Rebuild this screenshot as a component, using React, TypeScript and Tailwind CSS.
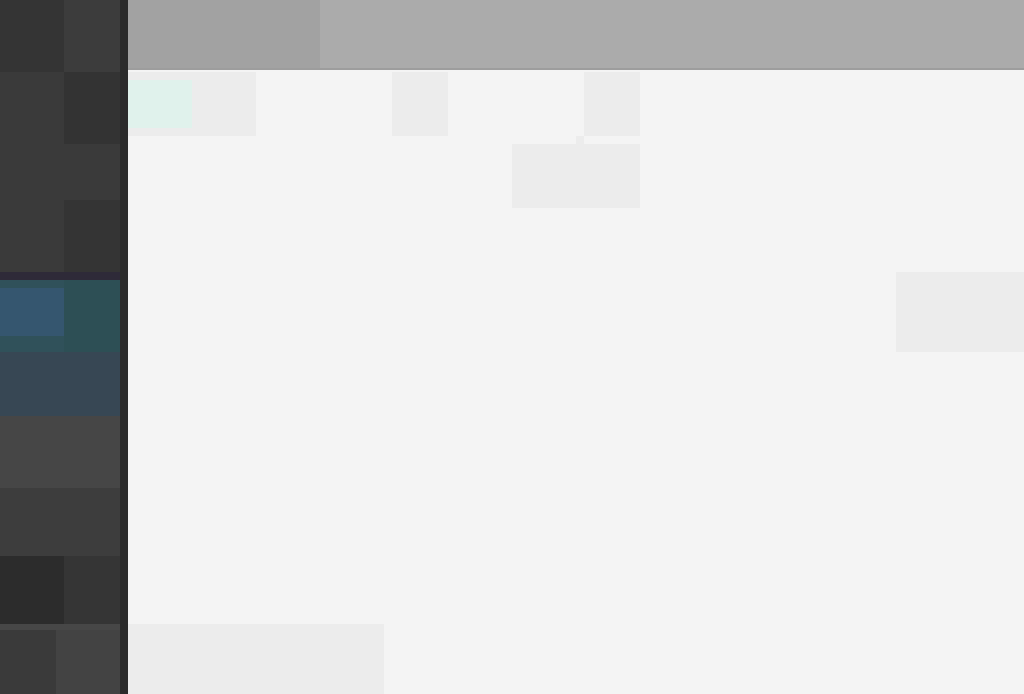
const sidebarRows: { h: string; left: string; right: string }[] = [
  { h: "h-[72px]", left: "bg-[#343434]", right: "bg-[#3c3c3c]" },
  { h: "h-[72px]", left: "bg-[#3a3a3a]", right: "bg-[#333333]" },
  { h: "h-[56px]", left: "bg-[#3a3a3a]", right: "bg-[#3a3a3a]" },
  { h: "h-[72px]", left: "bg-[#3a3a3a]", right: "bg-[#343434]" },
];

export default function App() {
  return (
    <div className="flex h-[694px] w-[1024px] overflow-hidden bg-[#f4f4f4] font-['Liberation_Sans',sans-serif]">
      {/* sidebar */}
      <aside className="flex w-[120px] flex-col bg-[#3a3a3a]">
        {sidebarRows.map((r, i) => (
          <div key={i} className={`flex ${r.h}`}>
            <div className={`w-16 ${r.left}`} />
            <div className={`flex-1 ${r.right}`} />
          </div>
        ))}
        <div className="h-[8px] bg-[#2e2a38]" />
        <div className="flex h-[72px] bg-[#2d4f55]">
          <div className="w-16 bg-[#30515a] pt-2 pb-4">
            <div className="h-full bg-[#35566f]" />
          </div>
        </div>
        <div className="h-[64px] bg-[#374754]" />
        <div className="h-[72px] bg-[#464646]" />
        <div className="h-[68px] bg-[#3d3d3d]" />
        <div className="flex h-[68px]">
          <div className="w-16 bg-[#2c2c2c]" />
          <div className="flex-1 bg-[#353535]" />
        </div>
        <div className="flex flex-1 flex-col">
          <div className="h-[6px] bg-[#474747]" />
          <div className="flex flex-1">
            <div className="w-14 bg-[#3a3a3a]" />
            <div className="flex-1 bg-[#434343]" />
          </div>
        </div>
      </aside>
      <div className="w-2 bg-[#2b2b2b]" />

      {/* main */}
      <main className="flex flex-1 flex-col">
        <header className="flex h-[70px] border-b-2 border-[#9d9d9d]">
          <div className="w-[192px] bg-[#a2a2a2]" />
          <div className="flex-1 bg-[#ababab]" />
        </header>
        <div className="flex flex-1 flex-col bg-[#f4f4f4]">
          <div className="mt-[2px] flex items-start">
            <div className="h-16 w-32 bg-[#ececec] pt-2">
              <div className="h-12 w-16 bg-[#e0f2ec]" />
            </div>
            <div className="ml-[136px] h-16 w-14 bg-[#ececec]" />
            <div className="ml-16 flex w-32 flex-col items-end">
              <div className="h-16 w-14 bg-[#ececec]" />
              <div className="mr-14 h-2 w-2 self-end bg-[#ececec]" />
              <div className="h-16 w-32 bg-[#ececec]" />
            </div>
          </div>
          <div className="ml-[768px] mt-16 h-20 w-32 bg-[#ececec]" />
          <div className="mt-auto h-[70px] w-64 bg-[#ececec]" />
        </div>
      </main>
    </div>
  );
}
